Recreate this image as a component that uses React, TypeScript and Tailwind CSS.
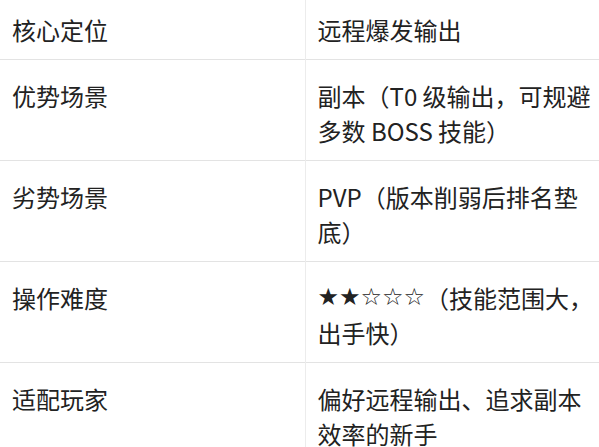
const rows: { label: string; value: React.ReactNode }[] = [
  { label: '核心定位', value: '远程爆发输出' },
  { label: '优势场景', value: '副本（T0 级输出，可规避多数 BOSS 技能）' },
  { label: '劣势场景', value: 'PVP（版本削弱后排名垫底）' },
  {
    label: '操作难度',
    value: (
      <>
        <span className="inline-block h-[35px] align-top leading-[35px] font-['DejaVu_Sans',sans-serif]">★★☆☆☆</span>（技能范围大，出手快）
      </>
    ),
  },
  { label: '适配玩家', value: '偏好远程输出、追求副本效率的新手' },
]

export default function App() {
  return (
    <div className="w-[599px] h-[447px] overflow-hidden bg-white text-[#222] font-['Noto_Sans_CJK_SC','Noto_Sans',sans-serif]">
      <table className="w-[599px] table-fixed border-collapse text-[24px] leading-[35px]">
        <colgroup>
          <col className="w-[305px]" />
          <col />
        </colgroup>
        <tbody>
          {rows.map((row, i) => (
            <tr key={row.label} className="border-b border-[#e3e3e3] align-top">
              <td className={`pl-3 pb-3 border-r border-[#ececec] ${i === 0 ? 'pt-3' : 'pt-[18px]'}`}>{row.label}</td>
              <td className={`pl-3 pr-0 pb-3 ${i === 0 ? 'pt-3' : 'pt-[18px]'}`}>{row.value}</td>
            </tr>
          ))}
        </tbody>
      </table>
    </div>
  )
}
